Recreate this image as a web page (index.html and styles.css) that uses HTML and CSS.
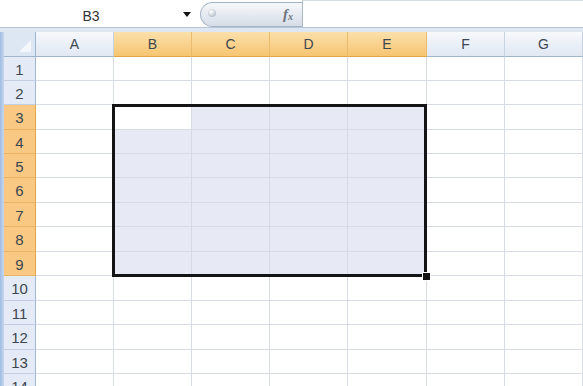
FILE: index.html
```html
<!DOCTYPE html>
<html>
<head>
<meta charset="utf-8">
<link rel="stylesheet" href="styles.css">
</head>
<body>
<div class="app">
  <div class="fbar">
    <div class="namebox">
      <span class="name-text">B3</span>
      <span class="dd"></span>
    </div>
    <div class="fxbtn">
      <span class="knob"></span>
      <span class="fx">f<sub>x</sub></span>
    </div>
    <div class="finput"></div>
  </div>
  <div class="strip"></div>
  <div class="sheet">
    <div class="lstrip"></div>
    <div class="grid">
      <div class="corner"><span class="tri"></span></div>
      <div class="ch">A</div><div class="ch on">B</div><div class="ch on">C</div><div class="ch on">D</div><div class="ch on">E</div><div class="ch">F</div><div class="ch">G</div>

      <div class="rh">1</div><div class="c"></div><div class="c"></div><div class="c"></div><div class="c"></div><div class="c"></div><div class="c"></div><div class="c"></div>
      <div class="rh">2</div><div class="c"></div><div class="c"></div><div class="c"></div><div class="c"></div><div class="c"></div><div class="c"></div><div class="c"></div>
      <div class="rh on">3</div><div class="c"></div><div class="c"></div><div class="c s"></div><div class="c s"></div><div class="c s"></div><div class="c"></div><div class="c"></div>
      <div class="rh on">4</div><div class="c"></div><div class="c s"></div><div class="c s"></div><div class="c s"></div><div class="c s"></div><div class="c"></div><div class="c"></div>
      <div class="rh on">5</div><div class="c"></div><div class="c s"></div><div class="c s"></div><div class="c s"></div><div class="c s"></div><div class="c"></div><div class="c"></div>
      <div class="rh on">6</div><div class="c"></div><div class="c s"></div><div class="c s"></div><div class="c s"></div><div class="c s"></div><div class="c"></div><div class="c"></div>
      <div class="rh on">7</div><div class="c"></div><div class="c s"></div><div class="c s"></div><div class="c s"></div><div class="c s"></div><div class="c"></div><div class="c"></div>
      <div class="rh on">8</div><div class="c"></div><div class="c s"></div><div class="c s"></div><div class="c s"></div><div class="c s"></div><div class="c"></div><div class="c"></div>
      <div class="rh on">9</div><div class="c"></div><div class="c s"></div><div class="c s"></div><div class="c s"></div><div class="c s"></div><div class="c"></div><div class="c"></div>
      <div class="rh">10</div><div class="c"></div><div class="c"></div><div class="c"></div><div class="c"></div><div class="c"></div><div class="c"></div><div class="c"></div>
      <div class="rh">11</div><div class="c"></div><div class="c"></div><div class="c"></div><div class="c"></div><div class="c"></div><div class="c"></div><div class="c"></div>
      <div class="rh">12</div><div class="c"></div><div class="c"></div><div class="c"></div><div class="c"></div><div class="c"></div><div class="c"></div><div class="c"></div>
      <div class="rh">13</div><div class="c"></div><div class="c"></div><div class="c"></div><div class="c"></div><div class="c"></div><div class="c"></div><div class="c"></div>
      <div class="rh">14</div><div class="c"></div><div class="c"></div><div class="c"></div><div class="c"></div><div class="c"></div><div class="c"></div><div class="c"></div>

      <div class="selbox"><span class="handle"></span></div>
    </div>
  </div>
</div>
</body>
</html>
```

FILE: styles.css
```css
html, body {
  margin: 0;
  padding: 0;
  background: #ffffff;
}
.app {
  width: 583px;
  height: 386px;
  overflow: hidden;
  font-family: "Liberation Sans", Arial, sans-serif;
  color: #3c4550;
}
.fbar {
  display: flex;
  height: 28px;
  box-sizing: border-box;
  border-bottom: 1px solid #b7c5d8;
  background: #ffffff;
}
.namebox {
  width: 200px;
  display: flex;
  align-items: center;
  padding-top: 4px;
  box-sizing: border-box;
}
.name-text {
  width: 182px;
  text-align: center;
  font-size: 14px;
  color: #333;
}
.dd {
  width: 0;
  height: 0;
  border-left: 4px solid transparent;
  border-right: 4px solid transparent;
  border-top: 5px solid #111;
  margin-left: 1px;
  margin-top: -2px;
}
.fxbtn {
  width: 102px;
  margin-top: 2px;
  height: 25px;
  box-sizing: border-box;
  border: 1px solid #a4b3c6;
  border-right: none;
  border-radius: 13px 0 0 13px;
  background: linear-gradient(#f6f8fb, #e2e8f0 60%, #d6dde7);
  display: flex;
  align-items: center;
  justify-content: space-between;
  padding: 0 9px 0 7px;
}
.knob {
  width: 8px;
  height: 8px;
  border-radius: 50%;
  background: radial-gradient(circle at 40% 35%, #ffffff, #b9c2cd 70%, #98a3b1);
  margin-top: -3px;
}
.fx {
  font-family: "Liberation Serif", "Times New Roman", serif;
  font-style: italic;
  font-weight: bold;
  font-size: 15px;
  color: #6d737b;
}
.fx sub {
  font-size: 10px;
  vertical-align: -1px;
}
.finput {
  flex: 1;
  border-left: 1px solid #a9b8cb;
  border-top: 1px solid #d6dde7;
  background: #fff;
}
.strip {
  height: 4px;
  background: #dde6f2;
}
.sheet {
  display: flex;
}
.lstrip {
  width: 4px;
  background: linear-gradient(90deg, #9fbbe2, #c7d8ef);
  flex: none;
}
.grid {
  position: relative;
  display: grid;
  grid-template-columns: 32px 78px 78px 78px 78px 79px 78px 78px;
  grid-template-rows: 25px 24px 24px 25px 24px 24px 25px 24px 25px 24px 25px 24px 25px 24px 24px;
}
.grid > div {
  box-sizing: border-box;
}
.corner {
  position: relative;
  background: #dde7f4;
  border-right: 1px solid #9eb6ce;
  border-bottom: 1px solid #9eb6ce;
}
.tri {
  position: absolute;
  right: 4px;
  bottom: 4px;
  width: 0;
  height: 0;
  border-left: 12px solid transparent;
  border-bottom: 12px solid #f4f7fb;
}
.ch {
  background: linear-gradient(#f7f9fc, #e9eff7 55%, #e1e8f2);
  border-right: 1px solid #c8d3e2;
  border-bottom: 1px solid #9eb6ce;
  display: flex;
  align-items: center;
  justify-content: center;
  font-size: 14px;
  color: #3d4650;
}
.ch.on {
  background: linear-gradient(#fbe0ab, #f9d18b 55%, #f6c571);
  border-right: 1px solid #e9bb6c;
  border-bottom: 1px solid #dfa547;
}
.rh {
  background: #e4ebf6;
  border-right: 1px solid #9eb6ce;
  border-bottom: 1px solid #c3cfe0;
  display: flex;
  align-items: center;
  justify-content: center;
  font-size: 15px;
  color: #3d4650;
  padding-top: 1px;
}
.rh.on {
  background: #f9c983;
  border-right: 1px solid #e3a64b;
  border-bottom: 1px solid #e9b565;
}
.c {
  border-right: 1px solid #d7dce5;
  border-bottom: 1px solid #d7dce5;
}
.c.s {
  background: #e7e9f4;
  border-right-color: #d6d9e6;
  border-bottom-color: #d6d9e6;
}
.selbox {
  position: absolute;
  grid-column: 3 / 7;
  grid-row: 4 / 11;
  top: -1px;
  bottom: -1px;
  left: -2px;
  right: 0;
  border: 3px solid #141414;
}
.handle {
  position: absolute;
  right: -6px;
  bottom: -6px;
  width: 7px;
  height: 7px;
  background: #141414;
  box-shadow: 0 0 0 1px #ffffff;
}
```
